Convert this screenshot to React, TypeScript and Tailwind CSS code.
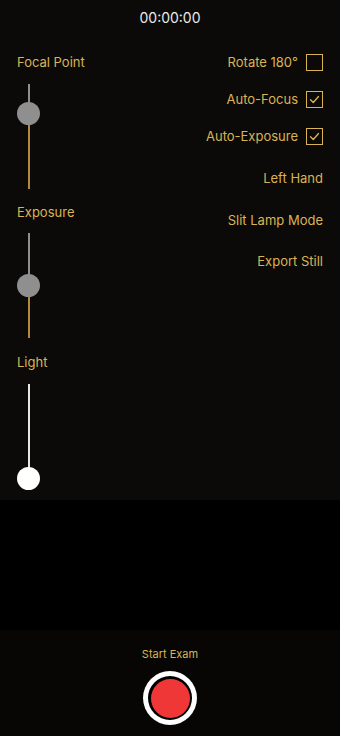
import React from "react";

const GOLD = "text-[#dab454]";

function Slider({ thumb, gold, white }: { thumb: number; gold: boolean; white?: boolean }) {
  return (
    <div className="relative h-[105px] w-[23px]">
      <div
        className={`absolute left-[10.5px] top-0 w-[2px] ${white ? "bg-[#e6e6e6]" : "bg-[#8e8e8e]"}`}
        style={{ height: thumb }}
      />
      {gold && (
        <div
          className="absolute left-[10.5px] bottom-0 w-[2px] bg-[#b08a3a]"
          style={{ top: thumb }}
        />
      )}
      <div
        className={`absolute left-0 h-[23px] w-[23px] rounded-full ${white ? "bg-white" : "bg-[#8f8f8f]"}`}
        style={{ top: thumb - 11.5 }}
      />
    </div>
  );
}

function Check({ checked }: { checked: boolean }) {
  return (
    <div className="flex h-[17px] w-[17px] items-center justify-center border-[1.5px] border-[#dab454]">
      {checked && (
        <svg width="11" height="11" viewBox="0 0 11 11" fill="none">
          <path d="M1.5 5.8 L4.3 8.5 L9.5 2.5" stroke="#dab454" strokeWidth="1.3" strokeLinecap="round" strokeLinejoin="round" />
        </svg>
      )}
    </div>
  );
}

export default function App() {
  const font = { fontFamily: "Inter, 'Open Sans', sans-serif" };
  return (
    <div className="flex h-[736px] w-[340px] flex-col bg-black" style={font}>
      <div className="flex h-[500px] flex-col bg-[#0c0a08]">
        <div className="flex h-[34px] items-center justify-center text-[14px] text-[#e8e8e8]">00:00:00</div>
        <div className="flex flex-row justify-between px-[17px]">
          <div className={`flex flex-col items-start ${GOLD} text-[13px] leading-4`}>
            <div className="mt-[20px]">Focal Point</div>
            <div className="mt-[14px]"><Slider thumb={29} gold /></div>
            <div className="mt-[15px]">Exposure</div>
            <div className="mt-[13px]"><Slider thumb={52} gold /></div>
            <div className="mt-[16px]">Light</div>
            <div className="mt-[14px]"><Slider thumb={94} gold={false} white /></div>
          </div>
          <div className={`flex flex-col items-end ${GOLD} text-[13px] leading-4`}>
            <div className="mt-[20px] flex h-4 items-center gap-[8px]">
              <span>Rotate 180°</span>
              <Check checked={false} />
            </div>
            <div className="mt-[21px] flex h-4 items-center gap-[8px]">
              <span>Auto-Focus</span>
              <Check checked />
            </div>
            <div className="mt-[21px] flex h-4 items-center gap-[8px]">
              <span>Auto-Exposure</span>
              <Check checked />
            </div>
            <div className="mt-[26px] flex h-4 items-center">Left Hand</div>
            <div className="mt-[26px] flex h-4 items-center">Slit Lamp Mode</div>
            <div className="mt-[25px] flex h-4 items-center">Export Still</div>
          </div>
        </div>
      </div>
      <div className="h-[130px] bg-black" />
      <div className="flex flex-1 flex-col items-center bg-[#070605]">
        <div className={`mt-[17px] text-[11px] leading-[14px] ${GOLD}`}>Start Exam</div>
        <div className="mt-[10px] flex h-[54px] w-[54px] items-center justify-center rounded-full bg-white">
          <div className="flex h-[44px] w-[44px] items-center justify-center rounded-full bg-black">
            <div className="h-[39px] w-[39px] rounded-full bg-[#ef3737]" />
          </div>
        </div>
      </div>
    </div>
  );
}
